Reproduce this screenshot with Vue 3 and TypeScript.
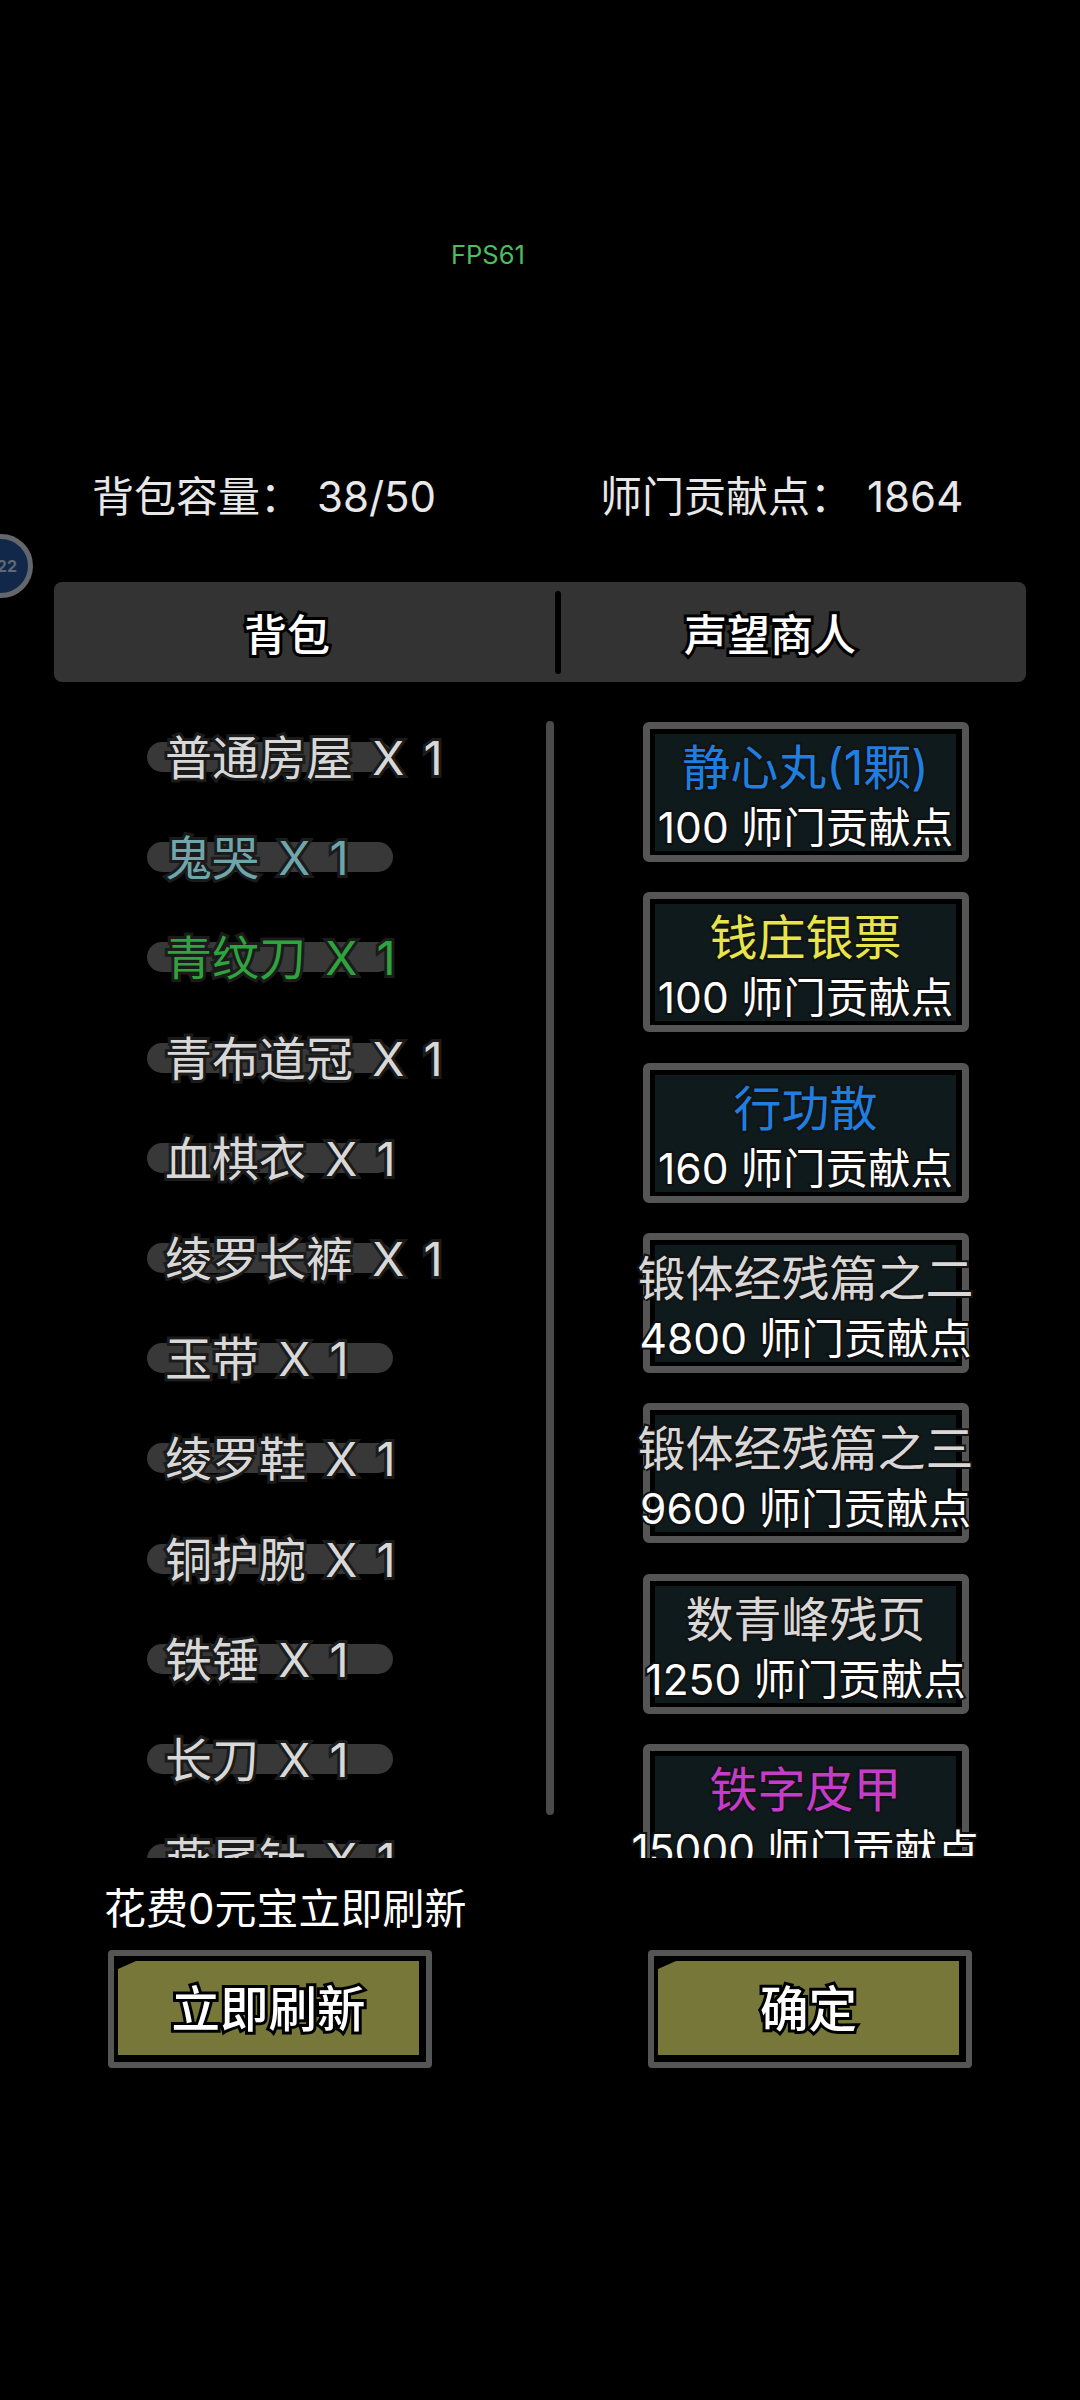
<script setup lang="ts">
interface BagItem { name: string; tone: string }
interface ShopItem { title: string; price: number; tone: string }

const bag: BagItem[] = [
  { name: '普通房屋', tone: 'plain' },
  { name: '鬼哭', tone: 'teal' },
  { name: '青纹刀', tone: 'green' },
  { name: '青布道冠', tone: 'plain' },
  { name: '血棋衣', tone: 'plain' },
  { name: '绫罗长裤', tone: 'plain' },
  { name: '玉带', tone: 'plain' },
  { name: '绫罗鞋', tone: 'plain' },
  { name: '铜护腕', tone: 'plain' },
  { name: '铁锤', tone: 'plain' },
  { name: '长刀', tone: 'plain' },
  { name: '燕尾针', tone: 'plain' },
]

const shop: ShopItem[] = [
  { title: '静心丸(1颗)', price: 100, tone: 'blue' },
  { title: '钱庄银票', price: 100, tone: 'yellow' },
  { title: '行功散', price: 160, tone: 'blue' },
  { title: '锻体经残篇之二', price: 4800, tone: 'plain' },
  { title: '锻体经残篇之三', price: 9600, tone: 'plain' },
  { title: '数青峰残页', price: 1250, tone: 'plain' },
  { title: '铁字皮甲', price: 15000, tone: 'magenta' },
]
</script>

<template>
  <div class="page">
    <div class="badge"><span>22</span></div>
    <div class="fps">FPS61</div>

    <div class="stats">
      <div class="stat stat-bag">背包容量：<span class="value">38/50</span></div>
      <div class="stat">师门贡献点：<span class="value">1864</span></div>
    </div>

    <div class="tabs">
      <div class="tab tab-left"><span class="tab-label">背包</span></div>
      <div class="tab-sep"></div>
      <div class="tab tab-right"><span class="tab-label">声望商人</span></div>
    </div>

    <div class="body">
      <div class="list">
        <div v-for="item in bag" :key="item.name" class="row">
          <span class="row-text" :class="item.tone">{{ item.name }} X 1</span>
        </div>
      </div>
      <div class="scrollbar"></div>
      <div class="shop">
        <div v-for="item in shop" :key="item.title" class="card">
          <div class="card-inner">
            <div class="card-title" :class="item.tone">{{ item.title }}</div>
            <div class="card-price">{{ item.price }} 师门贡献点</div>
          </div>
        </div>
      </div>
    </div>

    <div class="hint">花费0元宝立即刷新</div>

    <div class="actions">
      <div class="btn"><div class="btn-face"><span class="btn-label">立即刷新</span></div></div>
      <div class="btn"><div class="btn-face"><span class="btn-label">确定</span></div></div>
    </div>
  </div>
</template>

<style scoped>
.page {
  position: relative;
  width: 1080px;
  height: 2400px;
  background: #000;
  overflow: hidden;
  color: #e8e8e8;
  font-family: Inter, "Noto Sans CJK SC", sans-serif;
}

.badge {
  position: absolute;
  left: -31px;
  top: 534px;
  width: 64px;
  height: 64px;
  box-sizing: border-box;
  border: 5px solid #63676c;
  border-radius: 50%;
  background: #12284a;
  display: flex;
  align-items: center;
  justify-content: flex-end;
  padding-right: 11px;
  color: #5f6875;
  font-size: 16px;
  font-weight: 700;
}

.fps {
  margin: 237px 0 0 451px;
  height: 36px;
  line-height: 36px;
  font-size: 25.5px;
  color: #4cbe5e;
}

.stats {
  display: flex;
  margin-top: 194px;
  padding-left: 92px;
  height: 60px;
  line-height: 60px;
  font-size: 42px;
}

.stat-bag {
  width: 508px;
}

.value {
  margin-left: 15px;
}

.tabs {
  display: flex;
  align-items: center;
  margin: 55px 54px 0;
  height: 100px;
  background: #333;
  border-radius: 8px;
}

.tab {
  display: flex;
  align-items: center;
  justify-content: center;
  height: 100%;
}

.tab-left {
  width: 501px;
  padding-right: 35px;
  box-sizing: border-box;
}

.tab-right {
  flex: 1;
  padding-right: 47px;
  box-sizing: border-box;
}

.tab-sep {
  width: 6px;
  height: 83px;
  border-radius: 3px;
  background: #000;
}

.tab-label {
  color: #fff;
  font-size: 43px;
  font-weight: 500;
  -webkit-text-stroke: 6px #000;
  paint-order: stroke fill;
}

.body {
  display: grid;
  grid-template-columns: 399px 8px 1fr;
  height: 1158px;
  margin-top: 18px;
  padding-left: 147px;
  overflow: hidden;
}

.list {
  padding-top: 42px;
}

.row {
  width: 246px;
  height: 30px;
  margin-bottom: 70.2px;
  padding-left: 18px;
  box-sizing: border-box;
  border-radius: 15px;
  background: #383838;
  line-height: 32px;
  white-space: nowrap;
}

.row-text {
  font-size: 47px;
  word-spacing: 6px;
  -webkit-text-stroke: 6px #1b1b1b;
  paint-order: stroke fill;
}

.plain { color: #d8d8d8; }
.teal { color: #6fa6ab; }
.green { color: #2fa33d; }
.blue { color: #1f7fe0; }
.yellow { color: #e6e64c; }
.magenta { color: #c53ccb; }

.scrollbar {
  height: 1094px;
  margin-top: 21px;
  border-radius: 4px;
  background: #4a4a4a;
}

.shop {
  display: flex;
  flex-direction: column;
  gap: 30.33px;
  padding: 22px 0 0 89px;
}

.card {
  flex: none;
  width: 326px;
  height: 140px;
  box-sizing: border-box;
  border: 7px solid #555;
  border-radius: 6px;
  padding: 5px 6px 4px 5px;
}

.card-inner {
  display: flex;
  flex-direction: column;
  align-items: center;
  height: 100%;
  padding-top: 4px;
  box-sizing: border-box;
  background: #0e1a1c;
  white-space: nowrap;
}

.card-title {
  line-height: 60px;
  font-size: 48px;
  -webkit-text-stroke: 4px #131313;
  paint-order: stroke fill;
}

.card-price {
  line-height: 60px;
  font-size: 42.5px;
  color: #fff;
  -webkit-text-stroke: 4px #101010;
  paint-order: stroke fill;
}

.hint {
  margin-top: 21px;
  padding-left: 104px;
  height: 60px;
  line-height: 60px;
  font-size: 42px;
  color: #fff;
}

.actions {
  display: flex;
  gap: 216px;
  margin-top: 11px;
  padding-left: 108px;
}

.btn {
  width: 324px;
  height: 118px;
  box-sizing: border-box;
  border: 6px solid #555;
  border-radius: 4px;
  padding: 5px 7px 7px 4px;
}

.btn-face {
  display: flex;
  align-items: center;
  justify-content: center;
  height: 100%;
  padding-bottom: 5px;
  box-sizing: border-box;
  background: #77773a;
  clip-path: polygon(18px 0, 100% 0, 100% 100%, 0 100%, 0 8px);
}

.btn-label {
  color: #fff;
  font-size: 48.5px;
  font-weight: 500;
  -webkit-text-stroke: 6px #000;
  paint-order: stroke fill;
}
</style>
